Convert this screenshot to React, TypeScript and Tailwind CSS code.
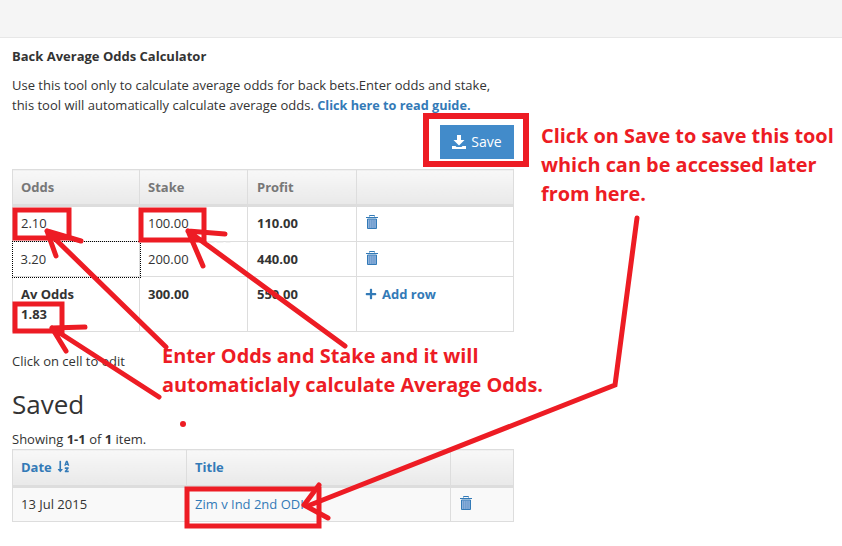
import { FaPlus, FaSortAlphaDown } from "react-icons/fa";

const RED = "#ed1c24";

function TrashIcon() {
  return (
    <svg width="12" height="14" viewBox="0 0 12 14" className="ml-px inline-block translate-y-[2px] align-top">
      <path d="M3.500 1.500V.5h5v1" fill="none" stroke="#337ab7" />
      <path d="M0 2h12v1H0z" fill="#337ab7" />
      <path d="M1.500 4h9v9.500h-9z" fill="#8fb3dc" stroke="#337ab7" />
      <path d="M3.500 4.500v8.500M5.300 4.500v8.500M7.100 4.500v8.500M8.900 4.500v8.500" stroke="#5f8fc6" strokeWidth="0.7" />
    </svg>
  );
}

function Th({ children, className = "" }: { children?: React.ReactNode; className?: string }) {
  return (
    <th className={`border border-[#ddd] border-b-[3px] bg-gradient-to-b from-[#f8f8f8] to-[#e9e9e9] px-[8px] text-left align-middle font-bold text-[#777] ${className}`}>
      {children}
    </th>
  );
}

function Td({ children, className = "" }: { children?: React.ReactNode; className?: string }) {
  return <td className={`border border-[#ddd] px-[8px] align-top ${className}`}>{children}</td>;
}

// hand drawn arrows and boxes on top of the page
function Annotations() {
  return (
    <svg className="pointer-events-none absolute left-0 top-0" width="842" height="546" fill="none" stroke={RED} strokeWidth="5" strokeLinecap="round" strokeLinejoin="miter">
      <rect x="426" y="116" width="100" height="48" strokeWidth="6" />
      <rect x="15" y="210" width="54" height="28" strokeWidth="5" />
      <rect x="141" y="210" width="63" height="30" strokeWidth="5" />
      <rect x="15" y="304" width="47" height="27" strokeWidth="5" />
      <rect x="187" y="489" width="132" height="37" strokeWidth="5" />
      <path d="M166 347 47 231M47 231l34 10M47 231l9 25" />
      <path d="M345 346 188 231M188 231l37 3M188 231l15 35" />
      <path d="M159 397 52 328M52 328l33-1M52 328l14 23" />
      <path d="M637 218 615 385 310 505" />
      <path d="M304 505 319 485M304 505l24 13" />
      <circle cx="183" cy="424" r="3" fill={RED} stroke="none" />
      <path d="M208 242h22" stroke="#e5e5e5" strokeWidth="1" strokeDasharray="6 3" />
    </svg>
  );
}

export default function App() {
  return (
    <div className="relative h-[546px] w-[842px] overflow-hidden bg-white font-['Open_Sans',sans-serif] text-[13px] leading-5 text-[#333]">
      <div className="h-[38px] border-b border-[#e7e7e7] bg-[#f5f5f5]" />

      <div className="w-[514px] pl-3 pt-2">
        <h4 className="h-5 text-[13px] font-bold">Back Average Odds Calculator</h4>
        <p className="mt-[9px] w-[490px]">
          Use this tool only to calculate average odds for back bets.Enter odds and stake, this tool will automatically
          calculate average odds. <a className="text-[12.7px] font-bold text-[#337ab7]">Click here to read guide.</a>
        </p>

        <div className="mt-[10px] flex justify-end">
          <button className="flex h-[34px] w-[74px] items-center justify-center gap-[5px] bg-[#428bca] text-sm text-white">
            <svg width="14" height="14" viewBox="0 0 14 14" fill="#fff">
              <path d="M5 0h4v5h3.500L7 10.500 1.500 5H5z" />
              <path d="M0 11h3.500l1 1h5l1-1H14v3H0z" />
            </svg>
            Save
          </button>
        </div>

        <table className="mt-[10px] w-[502px] table-fixed border-collapse">
          <colgroup>
            <col className="w-[127px]" />
            <col className="w-[108px]" />
            <col className="w-[109px]" />
            <col />
          </colgroup>
          <thead>
            <tr className="h-[36px]">
              <Th>Odds</Th>
              <Th>Stake</Th>
              <Th className="pl-[9px]">Profit</Th>
              <Th />
            </tr>
          </thead>
          <tbody>
            <tr className="h-[36px]">
              <Td className="!align-middle pb-[2px]">2.10</Td>
              <Td className="!align-middle pb-[2px]">100.00</Td>
              <Td className="!align-middle pb-[2px] pl-[9px] font-bold">110.00</Td>
              <Td className="!align-middle pb-[2px]"><TrashIcon /></Td>
            </tr>
            <tr className="h-[35px]">
              <td className="px-[8px] align-middle outline-1 outline-dotted outline-black">3.20</td>
              <Td className="!align-middle">200.00</Td>
              <Td className="!align-middle pl-[9px] font-bold">440.00</Td>
              <Td className="!align-middle pb-[1px]"><TrashIcon /></Td>
            </tr>
            <tr className="h-[55px]">
              <Td className="pt-[7px] font-bold">Av Odds<br />1.83</Td>
              <Td className="pt-[7px] font-bold">300.00</Td>
              <Td className="pt-[7px] pl-[9px] font-bold">550.00</Td>
              <Td className="pt-[7px] font-bold text-[#337ab7]">
                <span className="flex items-center gap-[5px]"><FaPlus size={12} />Add row</span>
              </Td>
            </tr>
          </tbody>
        </table>

        <p className="mt-[19px]">Click on cell to edit</p>
        <h2 className="mt-[19px] text-[26px] leading-[29px] font-normal">Saved</h2>
        <p className="mt-[10px]">
          Showing <b>1-1</b> of <b>1</b> item.
        </p>

        <table className="w-[502px] table-fixed border-collapse">
          <colgroup>
            <col className="w-[174px]" />
            <col className="w-[264px]" />
            <col />
          </colgroup>
          <thead>
            <tr className="h-[37px]">
              <Th className="pb-[2px] !text-[#337ab7]">
                <span className="flex items-center gap-[5px]">Date <FaSortAlphaDown size={13} /></span>
              </Th>
              <Th className="pb-[2px] !text-[#337ab7]">Title</Th>
              <Th />
            </tr>
          </thead>
          <tbody>
            <tr className="h-[35px] bg-[#f9f9f9]">
              <Td className="!align-middle pb-[1px]">13 Jul 2015</Td>
              <Td className="!align-middle pb-[1px] text-[#337ab7]">Zim v Ind 2nd ODI</Td>
              <Td className="!align-middle pb-[1px]"><TrashIcon /></Td>
            </tr>
          </tbody>
        </table>
      </div>

      <Annotations />

      <div className="absolute left-[541px] top-[121px] w-[300px] text-[19.9px] leading-[29px] font-bold text-[#ed1c24]">
        Click on Save to save this tool which can be accessed later from here.
      </div>
      <div className="absolute left-[162px] top-[341px] w-[400px] text-[19.9px] leading-[29px] font-bold text-[#ed1c24]">
        Enter Odds and Stake and it will automaticlaly calculate Average Odds.
      </div>
    </div>
  );
}
